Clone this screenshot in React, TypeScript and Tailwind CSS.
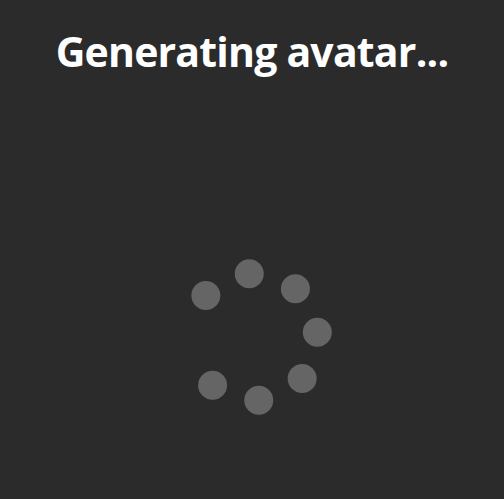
const DOT_ANGLES = [-4.3, 40.7, 85.7, 130.7, 220.7, 265.7, 310.7];

function Spinner() {
  const r = 63.5;
  return (
    <svg width="160" height="160" viewBox="-80 -80 160 160" aria-hidden="true">
      {DOT_ANGLES.map((a, i) => {
        const rad = (a * Math.PI) / 180;
        return <circle key={i} cx={r * Math.cos(rad)} cy={r * Math.sin(rad)} r="14.5" fill="#656565" />;
      })}
    </svg>
  );
}

export default function App() {
  return (
    <div className="min-h-[499px] w-full bg-[#2b2b2b] flex flex-col items-center">
      <h1
        className="mt-[25px] text-white font-bold text-[41px] leading-[53px] tracking-[-0.8px]"
        style={{ fontFamily: '"Open Sans", "Noto Sans", sans-serif' }}
      >
        Generating avatar...
      </h1>
      <div className="mt-[179px] ml-[4px]">
        <Spinner />
      </div>
    </div>
  );
}
